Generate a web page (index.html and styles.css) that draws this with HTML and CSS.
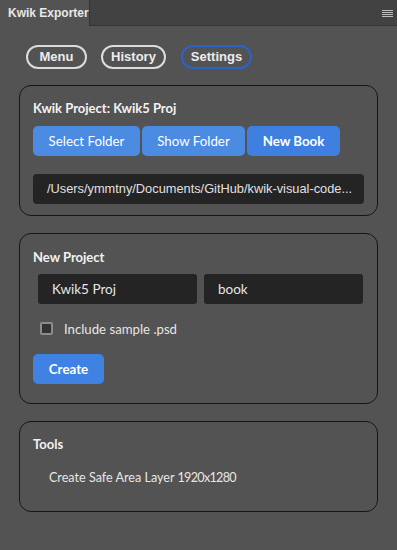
FILE: index.html
```html
<!DOCTYPE html>
<html>
<head>
<meta charset="utf-8">
<link rel="stylesheet" href="styles.css">
</head>
<body>
<div class="tabbar">
  <div class="tab">Kwik Exporter</div>
  <div class="tabfill">
    <svg class="burger" width="11" height="8" viewBox="0 0 11 8"><g fill="#bdbdbd"><rect x="0" y="0" width="11" height="1"/><rect x="0" y="2" width="11" height="1"/><rect x="0" y="4" width="11" height="1"/><rect x="0" y="6" width="11" height="1"/></g></svg>
  </div>
</div>
<div class="content">
  <div class="pills">
    <div class="pill p-menu">Menu</div>
    <div class="pill p-history">History</div>
    <div class="pill p-settings active">Settings</div>
  </div>
  <div class="card card1">
    <div class="title">Kwik Project: Kwik5 Proj</div>
    <div class="btnrow">
      <div class="btn b1">Select Folder</div>
      <div class="btn b2">Show Folder</div>
      <div class="btn b3">New Book</div>
    </div>
    <div class="path">/Users/ymmtny/Documents/GitHub/kwik-visual-code...</div>
  </div>
  <div class="card card2">
    <div class="title">New Project</div>
    <div class="inputs">
      <div class="input">Kwik5 Proj</div>
      <div class="input">book</div>
    </div>
    <div class="check"><span class="box"></span><span class="clabel">Include sample .psd</span></div>
    <div class="btn create">Create</div>
  </div>
  <div class="card card3">
    <div class="title">Tools</div>
    <div class="tool">Create Safe Area Layer <span class="num">1920x1280</span></div>
  </div>
</div>
</body>
</html>
```
FILE: styles.css
```css
html, body { margin: 0; padding: 0; }
body {
  background: #535353;
  width: 397px;
  height: 550px;
  overflow: hidden;
  font-family: Lato, "Noto Sans", sans-serif;
  color: #f0f0f0;
}
.tabbar {
  display: flex;
  height: 26px;
}
.tab {
  width: 90px;
  background: #535353;
  border-right: 1px solid #353535;
  font-family: "Liberation Sans", Arial, sans-serif;
  font-weight: bold;
  font-size: 12px;
  color: #e8e8e8;
  line-height: 26px;
  padding-left: 8px;
  box-sizing: border-box;
}
.tabfill {
  flex: 1;
  background: #424242;
  border-bottom: 1px solid #353535;
  display: flex;
  justify-content: flex-end;
  align-items: flex-start;
}
.burger { margin-top: 10px; margin-right: 4px; }
.content { padding: 19px 19px 0 19px; }
.pills {
  display: flex;
  gap: 14px;
  padding-left: 7px;
}
.pill {
  height: 24px;
  box-sizing: border-box;
  border: 2px solid #dcdcdc;
  border-radius: 12px;
  font-family: "Liberation Sans", Arial, sans-serif;
  font-weight: bold;
  font-size: 13px;
  line-height: 20px;
  color: #ececec;
  text-align: center;
}
.p-menu { width: 61px; }
.p-history { width: 65px; }
.p-settings { width: 71px; margin-left: 1px; }
.pill.active { border-color: #2a63c9; }
.card {
  border: 1px solid #161616;
  border-radius: 12px;
  padding: 0 13px;
}
.card1 { margin-top: 16px; height: 131px; box-sizing: border-box; padding-top: 14px; }
.card2 { margin-top: 17px; height: 171px; box-sizing: border-box; padding-top: 15px; }
.card3 { margin-top: 17px; height: 91px; box-sizing: border-box; padding-top: 14px; }
.title {
  font-weight: bold;
  font-size: 13px;
  line-height: 16px;
  color: #f2f2f2;
}
.btnrow { display: flex; gap: 2px; margin-top: 10px; }
.btn {
  height: 30px;
  border-radius: 5px;
  background: #4b8be2;
  color: #fff;
  font-size: 13.3px;
  line-height: 30px;
  text-align: center;
  box-sizing: border-box;
}
.b1 { width: 107px; }
.b2 { width: 103px; }
.b3 { width: 93px; background: #3e7fe0; font-weight: bold; }
.path {
  margin-top: 18px;
  height: 30px;
  width: 331px;
  background: #242424;
  border-radius: 4px;
  font-family: "Liberation Sans", Arial, sans-serif;
  font-size: 12.8px;
  line-height: 30px;
  color: #e0e0e0;
  padding-left: 14px;
  box-sizing: border-box;
  white-space: nowrap;
  overflow: hidden;
}
.inputs { display: flex; gap: 7px; margin-top: 9px; padding-left: 5px; }
.input {
  width: 159px;
  height: 30px;
  background: #242424;
  border-radius: 3px;
  font-size: 13.5px;
  line-height: 30px;
  color: #e6e6e6;
  padding-left: 14px;
  box-sizing: border-box;
}
.check {
  display: flex;
  align-items: center;
  margin-top: 18px;
  padding-left: 7px;
  height: 13px;
}
.box {
  width: 13px;
  height: 13px;
  box-sizing: border-box;
  border: 2px solid #8c8c8c;
  border-radius: 2px;
  background: #323232;
}
.clabel { margin-left: 11px; font-size: 13.2px; color: #e6e6e6; }
.create {
  margin-top: 19px;
  width: 71px;
  background: #3f82e4;
  font-weight: bold;
}
.tool {
  margin-top: 18px;
  padding-left: 16px;
  font-size: 12.6px;
  line-height: 16px;
  color: #e6e6e6;
}
.num { letter-spacing: -0.7px; }
```
